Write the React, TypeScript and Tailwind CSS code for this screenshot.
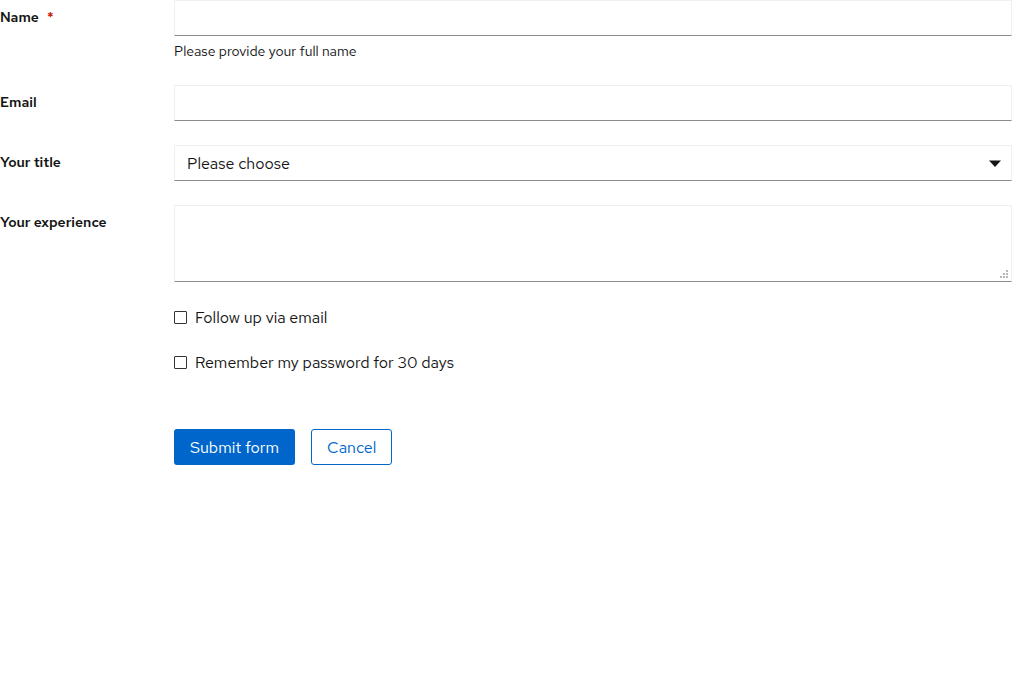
import React from "react";

const font = { fontFamily: '"Red Hat Text", "Noto Sans", "Liberation Sans", sans-serif' };

function Label({ children, required }: { children: React.ReactNode; required?: boolean }) {
  return (
    <div className="w-[174px] shrink-0 pt-[7px] text-[14px] font-semibold leading-[21px] text-[#151515]">
      {children}
      {required && <span className="ml-[8px] text-[#c9190b]">*</span>}
    </div>
  );
}

function Check({ children }: { children: React.ReactNode }) {
  return (
    <div className="flex">
      <div className="w-[174px] shrink-0" />
      <label className="flex items-center gap-[8px] text-[16px] leading-[21px] translate-y-[1px]">
        <span className="w-[13px] h-[13px] border border-[#333] bg-white rounded-[1px]" />
        {children}
      </label>
    </div>
  );
}

export default function App() {
  const inputCls =
    "block w-full h-[36px] border border-[#f0f0f0] border-b-[#8a8d90] bg-white px-[12px] text-[16px] text-[#151515] outline-none";
  return (
    <div className="w-[1012px] h-[688px] bg-white text-[#151515]" style={font}>
      <form className="flex flex-col gap-[24px]" onSubmit={(e) => e.preventDefault()}>
        <div className="flex">
          <Label required>Name</Label>
          <div className="flex-1">
            <input className={inputCls} style={font} />
            <div className="mt-[4px] h-[21px] text-[14px] leading-[21px] text-[#151515] translate-y-[1px]">
              Please provide your full name
            </div>
          </div>
        </div>
        <div className="flex">
          <Label>Email</Label>
          <div className="flex-1">
            <input className={inputCls} style={font} />
          </div>
        </div>
        <div className="flex">
          <Label>Your title</Label>
          <div className="flex-1">
            <div className="relative h-[36px] border border-[#f0f0f0] border-b-[#8a8d90] flex items-center pl-[12px] pt-[2px] text-[16px]">
              <span>Please choose</span>
              <svg className="absolute right-[10px] top-[13px]" width="12" height="9" viewBox="0 0 12 9">
                <path d="M0 1.5 L12 1.5 L6 8 Z" fill="#151515" />
              </svg>
            </div>
          </div>
        </div>
        <div className="flex">
          <Label>Your experience</Label>
          <div className="flex-1 relative">
            <textarea
              className="block w-full h-[77px] resize-none border border-[#f0f0f0] border-b-[#8a8d90] px-[12px] py-[6px] text-[16px] outline-none"
              style={font}
            />
            <svg className="absolute right-[4px] bottom-[4px]" width="8" height="8" viewBox="0 0 8 8">
              <rect x="6" y="0" width="2" height="2" fill="#b8b8b8" />
              <rect x="3" y="3" width="2" height="2" fill="#b8b8b8" />
              <rect x="6" y="3" width="2" height="2" fill="#b8b8b8" />
              <rect x="0" y="6" width="2" height="2" fill="#b8b8b8" />
              <rect x="3" y="6" width="2" height="2" fill="#b8b8b8" />
              <rect x="6" y="6" width="2" height="2" fill="#b8b8b8" />
            </svg>
          </div>
        </div>
        <Check>Follow up via email</Check>
        <Check>Remember my password for 30 days</Check>
        <div className="flex pt-[33px]">
          <div className="w-[174px] shrink-0" />
          <div className="flex gap-[16px]">
            <button type="submit" className="h-[36px] px-[16px] pt-[2px] rounded-[3px] bg-[#06c] text-white text-[16px]" style={font}>
              Submit form
            </button>
            <button type="button" className="h-[36px] px-[15px] pt-[2px] rounded-[3px] border border-[#06c] text-[#06c] text-[16px]" style={font}>
              Cancel
            </button>
          </div>
        </div>
      </form>
    </div>
  );
}
